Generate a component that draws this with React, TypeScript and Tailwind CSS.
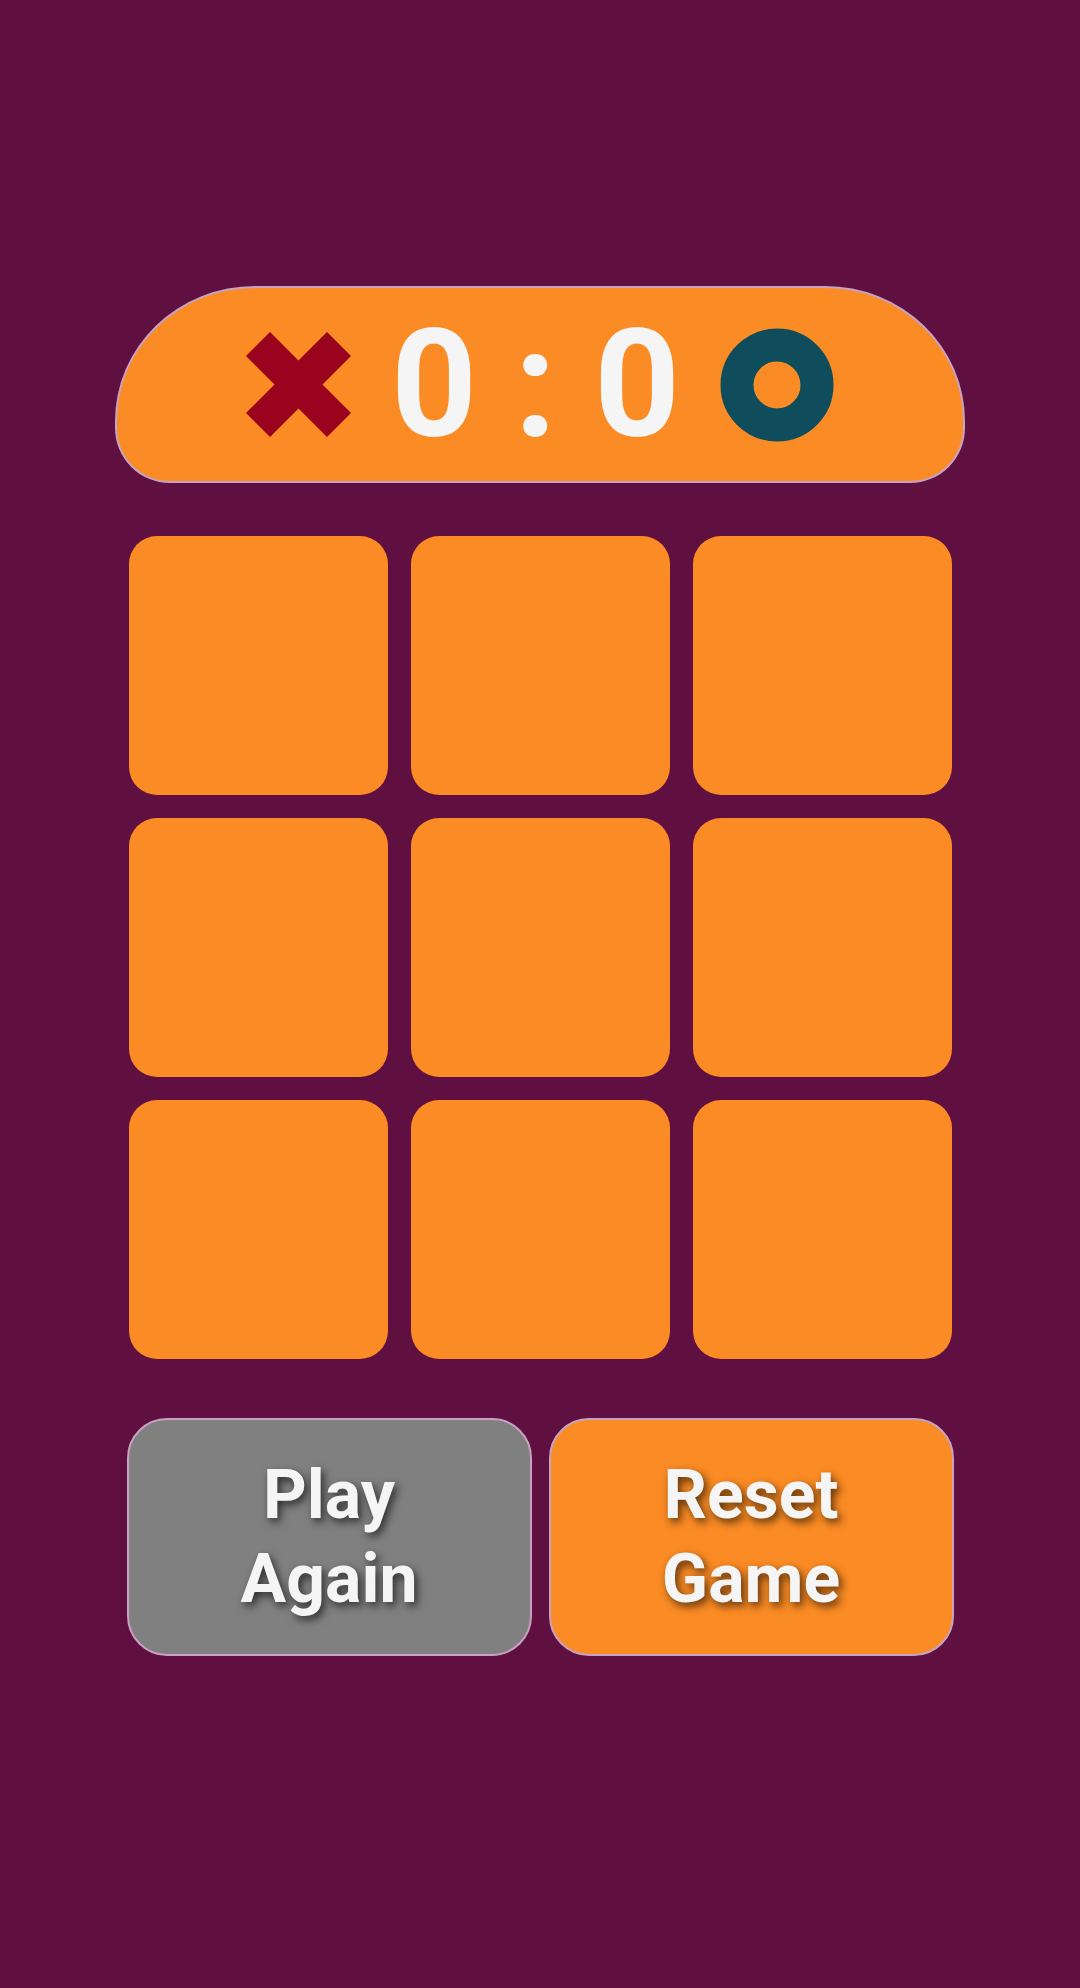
import React from "react";

const XMark = () => (
  <svg width="105" height="105" viewBox="0 0 105 105" className="shrink-0">
    <line x1="12" y1="12" x2="93" y2="93" stroke="#9A031E" strokeWidth="34" />
    <line x1="93" y1="12" x2="12" y2="93" stroke="#9A031E" strokeWidth="34" />
  </svg>
);

const OMark = () => (
  <svg width="114" height="114" viewBox="0 0 114 114" className="shrink-0">
    <circle cx="57" cy="57" r="40" fill="none" stroke="#0F4C5C" strokeWidth="33" />
  </svg>
);

export default function App() {
  const cells = Array.from({ length: 9 });
  return (
    <div
      className="w-[1080px] h-[1988px] bg-[#5F0F40] flex flex-col items-center pt-[286px]"
      style={{ fontFamily: "Roboto, 'Liberation Sans', sans-serif" }}
    >
      <div className="w-[850px] h-[197px] bg-[#FB8B24] border-2 border-[#c7a2c2] rounded-[140px_140px_55px_55px/135px_135px_55px_55px] flex items-center justify-center gap-[40px]">
        <XMark />
        <div className="text-[150px] font-bold leading-none text-[#f5f5f5] whitespace-pre">0 : 0</div>
        <OMark />
      </div>

      <div className="mt-[53px] grid grid-cols-[259px_259px_259px] gap-[23px]">
        {cells.map((_, i) => (
          <div key={i} className="w-[259px] h-[259px] bg-[#FB8B24] rounded-[28px]" />
        ))}
      </div>

      <div className="mt-[59px] flex gap-[17px]">
        <button className="w-[405px] h-[238px] bg-[#808080] border-2 border-[#c7a2c2] rounded-[40px] text-[68px] font-bold leading-[84px] text-[#f5f5f5] [text-shadow:3px_4px_8px_rgba(0,0,0,0.65)]">
          Play
          <br />
          Again
        </button>
        <button className="w-[405px] h-[238px] bg-[#FB8B24] border-2 border-[#c7a2c2] rounded-[40px] text-[68px] font-bold leading-[84px] text-[#f5f5f5] [text-shadow:3px_4px_8px_rgba(0,0,0,0.65)]">
          Reset
          <br />
          Game
        </button>
      </div>
    </div>
  );
}
